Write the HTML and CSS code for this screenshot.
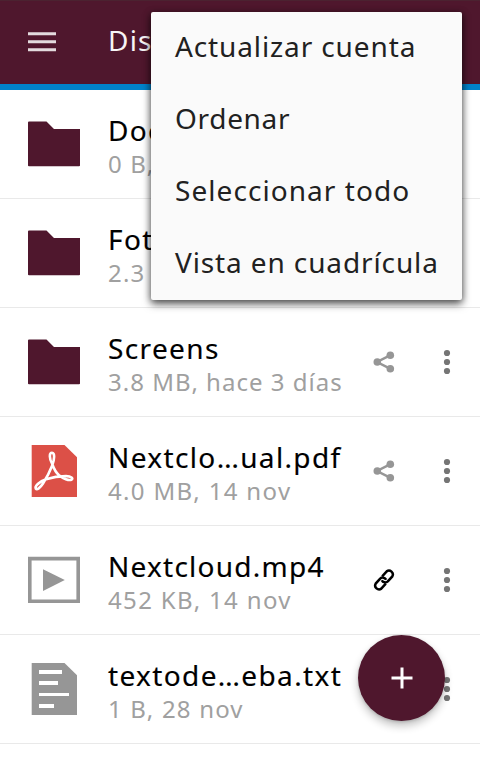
FILE: index.html
```
<!DOCTYPE html>
<html lang="es">
<head>
<meta charset="utf-8">
<title>Disroot</title>
<link rel="stylesheet" href="styles.css">
</head>
<body>
<svg class="defs" aria-hidden="true">
  <symbol id="folder" viewBox="0 0 52 54"><path d="M1 4.5H18.5L26 12H52V48.5Q52 49.3 51 49.3H1Q0 49.3 0 48.5V5.5Q0 4.5 1 4.5Z" fill="#4f172d"/></symbol>
  <symbol id="pdf" viewBox="0 0 52 54"><path d="M3.700 1H36.500L49 13.300V53H3.700Z" fill="#dc5047"/><path d="M24.200 20C21 14 21.200 8.800 24 8.800C27 8.800 26.600 15 24.200 21.500C21.500 28.500 18.200 34.500 15 39.500C12 44 9 46.200 7.800 44.600C6.500 42.300 11 37.600 18 35.300C25 33 32 32.100 38 32.100C43.500 32.200 45.500 34.500 43.600 35.600C41 37 35 34.500 31 31.200C27.500 28.300 26 25 24.200 20Z" fill="none" stroke="#fff" stroke-width="2.600" stroke-linejoin="round"/></symbol>
  <symbol id="video" viewBox="0 0 52 54"><path d="M1.800 5.600H50.200V48.300H1.800Z" fill="none" stroke="#969696" stroke-width="3.600"/><path d="M15 16.200L36.800 27L15 38Z" fill="#969696"/></symbol>
  <symbol id="text" viewBox="0 0 52 54"><path d="M3.700 1H36.500L49 13.300V53H3.700Z" fill="#969696"/><path d="M11 8H34V12H11ZM11 19H30V23H11ZM11 31H41V34H11ZM11 42H26V46H11Z" fill="#fff"/></symbol>
  <symbol id="share" viewBox="0 0 24 24"><path d="M18 5.300L5 12L18 18.700" fill="none" stroke="#969696" stroke-width="2.500"/><g fill="#969696"><circle cx="5.300" cy="12" r="3.800"/><circle cx="18.300" cy="5.300" r="3.800"/><circle cx="18.300" cy="18.700" r="3.800"/></g></symbol>
  <symbol id="link" viewBox="0 0 24 24"><g transform="rotate(-48 12 12)" fill="none" stroke="#000" stroke-width="2.500"><path d="M10.500 15.800H3.800A3.900 3.900 0 0 1 3.800 8.200H10.500A3.800 3.800 0 0 1 13.600 13.500"/><path d="M13.500 8.200H20.200A3.900 3.900 0 0 1 20.200 15.800H13.500A3.800 3.800 0 0 1 10.400 10.500"/></g></symbol>
  <symbol id="dots" viewBox="0 0 8 26"><g fill="#757575"><circle cx="4" cy="4" r="3.100"/><circle cx="4" cy="13" r="3.100"/><circle cx="4" cy="22" r="3.100"/></g></symbol>
</svg>

<header class="bar">
  <svg class="burger" viewBox="0 0 28 20"><path d="M0 1.800H28M0 9.800H28M0 17.800H28" stroke="#e3dbde" stroke-width="3"/></svg>
  <h1 class="heading">Dis</h1>
</header>

<main class="list">
  <div class="row">
    <svg class="icon"><use href="#folder"/></svg>
    <div class="info"><div class="name snug">Doc</div><div class="meta">0 B,</div></div>
  </div>
  <div class="row">
    <svg class="icon"><use href="#folder"/></svg>
    <div class="info"><div class="name">Fot</div><div class="meta">2.3</div></div>
  </div>
  <div class="row">
    <svg class="icon"><use href="#folder"/></svg>
    <div class="info"><div class="name">Screens</div><div class="meta tight">3.8 MB, hace 3 días</div></div>
    <svg class="action"><use href="#share"/></svg>
    <svg class="more"><use href="#dots"/></svg>
  </div>
  <div class="row">
    <svg class="icon"><use href="#pdf"/></svg>
    <div class="info"><div class="name">Nextclo…ual.pdf</div><div class="meta loose">4.0 MB, 14 nov</div></div>
    <svg class="action"><use href="#share"/></svg>
    <svg class="more"><use href="#dots"/></svg>
  </div>
  <div class="row">
    <svg class="icon"><use href="#video"/></svg>
    <div class="info"><div class="name snug">Nextcloud.mp4</div><div class="meta loose">452 KB, 14 nov</div></div>
    <svg class="action"><use href="#link"/></svg>
    <svg class="more"><use href="#dots"/></svg>
  </div>
  <div class="row">
    <svg class="icon"><use href="#text"/></svg>
    <div class="info"><div class="name">textode…eba.txt</div><div class="meta">1 B, 28 nov</div></div>
    <svg class="more"><use href="#dots"/></svg>
  </div>
</main>

<nav class="menu">
  <div class="item">Actualizar cuenta</div>
  <div class="item tight">Ordenar</div>
  <div class="item loose">Seleccionar todo</div>
  <div class="item">Vista en cuadrícula</div>
</nav>

<button class="fab" aria-label="Añadir"><svg viewBox="0 0 22 22"><path d="M11 .5V21.500M.5 11H21.500" stroke="#fff" stroke-width="3"/></svg></button>
</body>
</html>
```
FILE: styles.css
```
* { box-sizing: border-box; }
body {
  margin: 0;
  height: 762px;
  overflow: hidden;
  position: relative;
  background: #fff;
  color: #000;
  font-family: "Noto Sans", "Open Sans", sans-serif;
}
.defs { position: absolute; width: 0; height: 0; }

.bar {
  display: flex;
  align-items: flex-start;
  height: 90px;
  padding: 0 28px;
  background: #4f172d;
  border-top: 1px solid #4b2230;
  border-bottom: 6px solid #0082c9;
}
.burger { width: 28px; height: 20px; margin-top: 31px; }
.heading {
  margin: 20px 0 0 52px;
  font-size: 28px;
  line-height: 38px;
  font-weight: 400;
  letter-spacing: 1.2px;
  color: #f8f5f6;
}

.row {
  display: flex;
  align-items: center;
  height: 109px;
  padding-right: 29px;
  padding-left: 28px;
  border-bottom: 1px solid #e9e9e9;
}
.icon { flex: none; width: 52px; height: 54px; }
.info { flex: 1; margin-left: 28px; padding-top: 4px; white-space: nowrap; }
.name { font-size: 28px; line-height: 34px; letter-spacing: 1.37px; -webkit-text-stroke: .15px currentColor; }
.name.snug { letter-spacing: 1.25px; }
.meta { font-size: 24px; line-height: 33px; letter-spacing: 1.18px; color: #a0a0a0; }
.meta.tight { letter-spacing: 1.02px; }
.meta.loose { letter-spacing: 1.34px; }
.action { flex: none; width: 24px; height: 24px; }
.more { flex: none; width: 8px; height: 26px; margin-left: 47px; }

.menu {
  position: absolute;
  top: 12px;
  left: 151px;
  width: 311px;
  height: 288px;
  background: #fafafa;
  border-radius: 2px;
  box-shadow: 0 4px 9px rgba(0, 0, 0, .56), 0 1px 7px rgba(0, 0, 0, .38);
}
.item {
  height: 72px;
  padding-left: 24px;
  font-size: 28px;
  line-height: 69px;
  letter-spacing: .88px;
  color: #212121;
  white-space: nowrap;
}
.item.tight { letter-spacing: .68px; }
.item.loose { letter-spacing: 1.06px; }

.fab {
  position: absolute;
  left: 358px;
  top: 635px;
  width: 87px;
  height: 86px;
  padding: 0;
  display: grid;
  place-items: center;
  border: 0;
  border-radius: 50%;
  background: #4f172d;
  box-shadow: 0 5px 8px rgba(0, 0, 0, .24), 0 1px 3px rgba(0, 0, 0, .16);
}
.fab svg { width: 22px; height: 22px; }
```
